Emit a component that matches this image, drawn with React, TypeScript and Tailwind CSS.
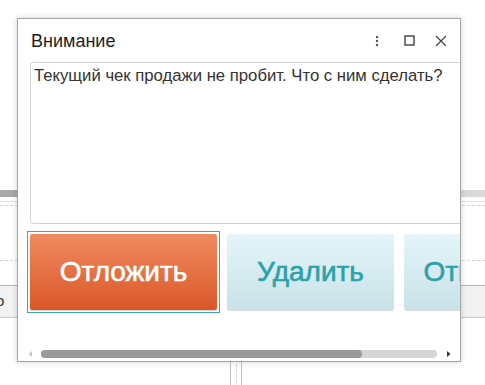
import React from "react";

export default function App() {
  return (
    <div className="relative w-[485px] h-[385px] overflow-hidden bg-white font-['Liberation_Sans',Arial,sans-serif]">
      {/* background application */}
      <div className="flex flex-col w-full">
        <div className="h-[190px]" />
        <div className="flex h-[7px]">
          <div className="w-1/2 bg-[#a9a9a9]" />
          <div className="w-1/2 bg-[#d9d9d9]" />
        </div>
        <div className="h-[4px]" />
        <div className="h-px bg-[#e2e2e2]" />
        <div className="h-[3px]" />
        <div className="border-t border-dashed border-[#d4d4d4]" />
        <div className="h-[54px]" />
        <div className="border-t border-dashed border-[#d4d4d4]" />
        <div className="h-[24px]" />
        <div className="h-px bg-[#b5b5b5]" />
        <div className="h-[31px] bg-[#f2f2f2] flex items-center">
          <span className="ml-[-4px] text-[15px] text-[#333]">о</span>
        </div>
        <div className="h-px bg-[#c8c8c8]" />
        <div className="flex h-[80px]">
          <div className="w-[230px]" />
          <div className="w-px bg-[#c4c4c4]" />
          <div className="w-[5px]" />
          <div className="border-l border-dashed border-[#d0d0d0]" />
          <div className="w-[4px]" />
          <div className="w-px bg-[#c4c4c4]" />
        </div>
      </div>

      {/* dialog */}
      <div className="absolute left-[17px] top-[18px] w-[444px] h-[344px] border border-[#a6a6a6] bg-white shadow-[0_0_6px_rgba(0,0,0,0.18)] flex flex-col overflow-hidden">
        <div className="h-[43px] flex items-center pl-[13px] pr-[13px] shrink-0">
          <span className="text-[18px] text-[#1e1e1e] leading-none mt-[1px]">Внимание</span>
          <div className="ml-auto flex items-center">
            <svg width="4" height="12" viewBox="0 0 4 12" className="mr-[25px]">
              <circle cx="2" cy="2" r="1.2" fill="#555" />
              <circle cx="2" cy="6" r="1.2" fill="#555" />
              <circle cx="2" cy="10" r="1.2" fill="#555" />
            </svg>
            <svg width="11" height="11" viewBox="0 0 11 11" className="mr-[20px]">
              <rect x="1" y="1" width="9" height="9" fill="none" stroke="#333" strokeWidth="1.3" />
            </svg>
            <svg width="12" height="12" viewBox="0 0 12 12">
              <path d="M1 1 L11 11 M11 1 L1 11" stroke="#444" strokeWidth="1.2" fill="none" />
            </svg>
          </div>
        </div>

        <div className="pl-[12px] shrink-0">
          <div className="w-[560px] h-[162px] border border-[#d2d2d2] rounded-[3px] pl-[3px] pt-[3px]">
            <p className="text-[16.7px] leading-[19px] text-[#333]">
              Текущий чек продажи не пробит. Что с ним сделать?
            </p>
          </div>
        </div>

        <div className="flex pl-[9px] mt-[7px] shrink-0">
          <div className="w-[193px] h-[82px] border border-[#3fa8ad] p-[2px] shrink-0">
            <div className="w-full h-full rounded-[2px] bg-gradient-to-b from-[#ef8a5f] to-[#da5727] shadow-[0_1px_1px_rgba(0,0,0,0.2)] flex items-center justify-center">
              <span className="text-[28px] text-white [-webkit-text-stroke:0.6px_#ffffff]">Отложить</span>
            </div>
          </div>
          <div className="ml-[7px] mt-[3px] w-[167px] h-[76px] shrink-0 rounded-[2px] bg-gradient-to-b from-[#e5f5f9] to-[#c8e2e8] shadow-[0_1px_1px_rgba(0,0,0,0.15)] flex items-center justify-center">
            <span className="text-[28px] text-[#2ba2a8] [-webkit-text-stroke:0.6px_#2ba2a8]">Удалить</span>
          </div>
          <div className="ml-[10px] mt-[3px] w-[167px] h-[76px] shrink-0 rounded-[2px] bg-gradient-to-b from-[#e5f5f9] to-[#c8e2e8] shadow-[0_1px_1px_rgba(0,0,0,0.15)] flex items-center justify-center">
            <span className="text-[28px] text-[#2ba2a8] [-webkit-text-stroke:0.6px_#2ba2a8]">Отменить</span>
          </div>
        </div>

        <div className="mt-auto mb-[3px] h-[8px] flex items-center shrink-0">
          <svg width="6" height="8" viewBox="0 0 6 8" className="ml-[9px]">
            <path d="M5 1 L1.5 4 L5 7 Z" fill="#c8c8c8" />
          </svg>
          <div className="ml-[8px] w-[396px] h-[8px] rounded-full bg-[#d6d6d6] flex">
            <div className="w-[321px] h-full rounded-full bg-[#9a9a9a]" />
          </div>
          <svg width="6" height="8" viewBox="0 0 6 8" className="ml-[9px]">
            <path d="M1 1 L4.5 4 L1 7 Z" fill="#333" />
          </svg>
        </div>
      </div>
    </div>
  );
}
